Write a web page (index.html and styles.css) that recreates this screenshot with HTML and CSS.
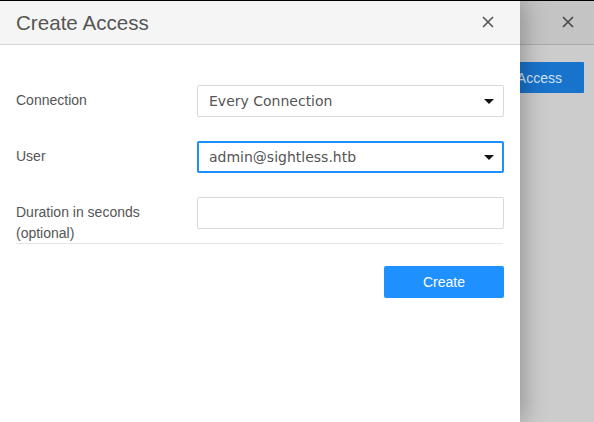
FILE: index.html
```html
<!DOCTYPE html>
<html>
<head>
<meta charset="utf-8">
<link rel="stylesheet" href="styles.css">
</head>
<body>
<div class="topbar"></div>
<div class="stage">
  <div class="back">
    <div class="back-header">
      <span class="close back-close"><svg width="12" height="12" viewBox="0 0 12 12"><path d="M1 1L11 11M11 1L1 11" stroke="#474747" stroke-width="1.6"/></svg></span>
    </div>
    <div class="back-body">
      <span class="back-btn">Create Access</span>
    </div>
  </div>
  <div class="dialog">
    <div class="dialog-header">
      <h1 class="title">Create Access</h1>
      <span class="close"><svg width="12" height="12" viewBox="0 0 12 12"><path d="M1 1L11 11M11 1L1 11" stroke="#555" stroke-width="1.6"/></svg></span>
    </div>
    <div class="dialog-body">
      <div class="row">
        <label class="label">Connection</label>
        <div class="field select"><span>Every Connection</span><i class="caret"></i></div>
      </div>
      <div class="row">
        <label class="label">User</label>
        <div class="field select focused"><span>admin@sightless.htb</span><i class="caret"></i></div>
      </div>
      <div class="row">
        <label class="label">Duration in seconds<br>(optional)</label>
        <div class="field"></div>
      </div>
      <div class="divider"></div>
      <div class="actions">
        <button class="btn">Create</button>
      </div>
    </div>
  </div>
</div>
</body>
</html>
```

FILE: styles.css
```css
html, body {
  margin: 0;
  padding: 0;
  height: 100%;
  overflow: hidden;
}
body {
  font-family: "Liberation Sans", Arial, sans-serif;
  background: #cccccc;
}
.topbar {
  height: 1px;
  background: #000;
}
.stage {
  position: relative;
  height: 421px;
}
.back {
  height: 100%;
  background: #cccccc;
}
.back-header {
  height: 43px;
  background: #c4c4c4;
  border-bottom: 1px solid #a9a9a9;
  display: flex;
  justify-content: flex-end;
  align-items: center;
  padding-right: 20px;
}
.back-close {
  display: flex;
}
.back-body {
  display: flex;
  justify-content: flex-end;
  padding: 17px 10px 0 0;
}
.back-btn {
  display: flex;
  align-items: center;
  justify-content: flex-end;
  height: 31px;
  padding: 0 22px 0 16px;
  background: #1873cc;
  color: #d2e3f3;
  font-size: 14px;
  border-radius: 1px;
}
.dialog {
  position: absolute;
  left: 0;
  top: 0;
  bottom: 0;
  width: 520px;
  background: #fff;
  box-shadow: 4px 0 22px rgba(0, 0, 0, 0.28);
}
.dialog-header {
  height: 43px;
  background: #f5f5f5;
  border-bottom: 1px solid #d6d6d6;
  display: flex;
  align-items: center;
  justify-content: space-between;
  padding: 0 26px 0 16px;
}
.title {
  margin: 0;
  font-weight: normal;
  font-size: 20.6px;
  color: #555;
}
.close {
  display: flex;
  margin-top: -2px;
}
.dialog-body {
  padding: 40px 16px 0 16px;
}
.row {
  display: flex;
  align-items: flex-start;
  height: 56px;
}
.label {
  width: 181px;
  font-size: 14px;
  line-height: 21px;
  color: #555;
  padding-top: 5px;
}
.field {
  box-sizing: border-box;
  width: 307px;
  height: 32px;
  border: 1px solid #d9d9d9;
  border-radius: 2px;
  background: #fff;
}
.select {
  display: flex;
  align-items: center;
  justify-content: space-between;
  padding: 0 9px 0 11px;
  font-family: "DejaVu Sans", sans-serif;
  font-size: 14px;
  color: #555;
}
.select.focused {
  border: 2px solid #1e8fff;
  padding: 0 8px 0 10px;
}
.caret {
  width: 0;
  height: 0;
  border-left: 5px solid transparent;
  border-right: 5px solid transparent;
  border-top: 5px solid #111;
  margin-right: 0;
}
.divider {
  margin-top: -10px;
  height: 1px;
  background: #e6e6e6;
  width: 487px;
}
.actions {
  display: flex;
  justify-content: flex-end;
  width: 488px;
  padding-top: 22px;
}
.btn {
  width: 120px;
  height: 32px;
  border: none;
  border-radius: 2px;
  background: #1e90ff;
  color: #fff;
  font-family: "Liberation Sans", Arial, sans-serif;
  font-size: 14px;
  padding: 0;
}
```
